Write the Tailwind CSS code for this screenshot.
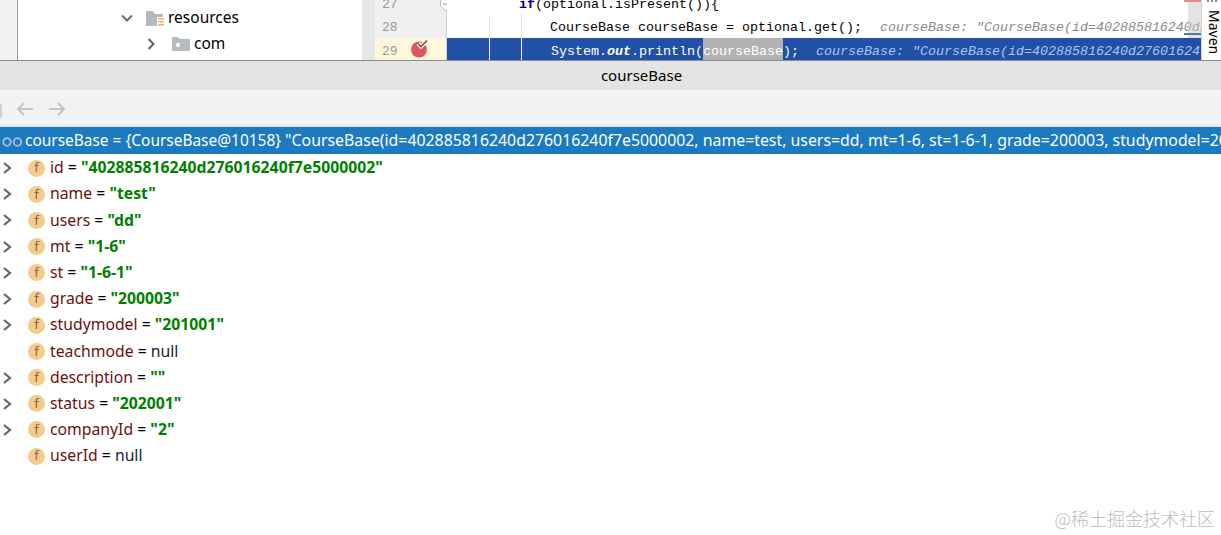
<!DOCTYPE html>
<html>
<head>
<meta charset="utf-8">
<script src="https://cdn.jsdelivr.net/npm/@tailwindcss/browser@4"></script>
</head>
<body class="bg-white overflow-hidden">
<div class="relative w-[1221px] h-[535px] overflow-hidden flex flex-col bg-white font-['Noto_Sans','Open_Sans',sans-serif] text-black">
  <!-- top: project tree + editor -->
  <div class="flex h-[60px] shrink-0 overflow-hidden">
    <div class="w-[18px] bg-[#f2f2f2] border-r border-[#9a9a9a] shrink-0"></div>
    <div class="w-[344px] shrink-0 bg-white flex flex-col justify-end relative">
      <div class="h-[26px] flex items-center pl-[102px] text-[15.5px]">
        <svg width="14" height="14" viewBox="0 0 14 14"><path d="M2 4.500 7 9.500 12 4.500" fill="none" stroke="#6e6e6e" stroke-width="2"/></svg>
        <svg width="19" height="17" viewBox="0 0 19 17" class="ml-[12px]"><path d="M0 1h7l2 3h8v12H0z" fill="#b5b9c0"/><path d="M11 7h7v9h-7z" fill="#fff"/><path d="M12 8h6v1.500h-6zM12 11h6v1.500h-6zM12 14h6v1.500h-6z" fill="#e3b566"/></svg>
        <span class="ml-[3px]">resources</span>
      </div>
      <div class="h-[26px] mb-[3px] flex items-center pl-[126px] text-[15.5px]">
        <svg width="14" height="14" viewBox="0 0 14 14"><path d="M4.500 2 9.500 7 4.500 12" fill="none" stroke="#5f5f5f" stroke-width="2"/></svg>
        <svg width="18" height="14" viewBox="0 0 18 14" class="ml-[14px]"><path d="M0 0h6l2 2h10v12H0z" fill="#b4bcbf"/><circle cx="6" cy="8" r="2.200" fill="#fff"/></svg>
        <span class="ml-[4px]">com</span>
      </div>
    </div>
    <div class="w-[13px] shrink-0 bg-[#e6e6e6]"></div>
    <!-- gutter -->
    <div class="w-[72px] shrink-0 bg-[#f0f0f0] relative font-['Liberation_Mono',monospace] text-[13px] text-[#9a9a9a] border-r border-[#d0d0d0]">
      <div class="h-[17px] pl-[7px] flex items-center"><span class="-mt-[8px]">27</span></div>
      <div class="h-[21px] pl-[7px] flex items-center">28</div>
      <div class="h-[22px] pl-[7px] flex items-center bg-[#fdf7dc] relative">
        <span class="mt-[6px]">29</span>
        <svg width="20" height="20" viewBox="0 0 20 20" class="absolute left-[34px] top-[1px]"><circle cx="10" cy="10.500" r="8" fill="#db5860"/><path d="M9 4.500 12 7.500 18 1.500" fill="none" stroke="#fdf7dc" stroke-width="4"/><path d="M9 4.500 12 7.500 18 1.500" fill="none" stroke="#5c5c5c" stroke-width="1.600"/></svg>
      </div>
      <svg width="12" height="12" viewBox="0 0 12 12" class="absolute left-[65px] top-0"><path d="M.5 -1V6L6 11 11.500 6V-1z" fill="#fff" stroke="#bdbdbd"/><path d="M3 4h6" stroke="#9a9a9a"/></svg>
    </div>
    <!-- code -->
    <div class="relative flex-1 min-w-0 overflow-hidden bg-white font-['Liberation_Mono',monospace] text-[13.33px]">
      <div class="h-[17px] pl-[72px] flex items-center whitespace-pre"><span class="-mt-[8px]"><b class="text-[#000080]">if</b>(optional.isPresent()){</span></div>
      <div class="h-[21px] pl-[103px] flex items-center whitespace-pre"><span>CourseBase courseBase = optional.get();  <i class="text-[#8a8a8a] ml-[2px]">courseBase: "CourseBase(id=402885816240d27601624</i></span></div>
      <div class="h-[22px] pl-[104px] flex items-start bg-[#2150a6] text-white whitespace-pre overflow-hidden"><span class="pt-[6px] leading-[16px]">System.<b><i>out</i></b>.println(<span class="bg-[#b2b2b2] inline-block pt-[6px] -mt-[6px]">courseBase</span>);  <i class="text-[#a9c6ef] ml-[1px]">courseBase: "CourseBase(id=402885816240d27601624</i></span></div>
      <div class="absolute left-[42px] top-[16px] h-[22px] w-px bg-[#e3e3e3]"></div>
      <div class="absolute left-[74px] top-[14px] h-[24px] w-px bg-[#e3e3e3]"></div>
      <div class="absolute left-[42px] top-[38px] h-[22px] w-px bg-white"></div>
      <div class="absolute left-[74px] top-[38px] h-[22px] w-px bg-white"></div>
      <div class="absolute right-0 top-0 h-[38px] w-[13px] bg-[#c8c8c8]/50"></div>
      <div class="absolute right-0 top-0 h-[2px] w-[17px] bg-[#e58a8a]"></div>
      <div class="absolute right-0 top-[33px] h-[2px] w-[17px] bg-[#5577aa]"></div>
    </div>
    <div class="w-[20px] shrink-0 bg-white border-l border-[#d0d0d0] relative">
      <span class="absolute top-[10px] left-[3px] text-[14px] leading-[18px] [writing-mode:vertical-rl]">Maven</span>
      <div class="absolute top-0 left-[5px] w-[10px] h-[2px] border-t-2 border-dotted border-[#888]"></div>
    </div>
  </div>
  <div class="h-px bg-[#8c8c8c] shrink-0"></div>
  <!-- title -->
  <div class="h-[29px] bg-[#e4e4e4] shrink-0 flex items-center justify-center text-[15px] pl-[62px]">courseBase</div>
  <!-- toolbar -->
  <div class="relative h-[36px] bg-[#f2f2f2] shrink-0 flex items-center pl-[16px] pt-[2px] gap-[14px]">
    <div class="absolute left-0 top-[14px] w-[2px] h-[14px] bg-[#d0d0d0]"></div>
    <svg width="18" height="14" viewBox="0 0 18 14"><path d="M17 7H2M8 1 2 7 8 13" fill="none" stroke="#c4c4c4" stroke-width="2"/></svg>
    <svg width="18" height="14" viewBox="0 0 18 14"><path d="M1 7H16M10 1 16 7 10 13" fill="none" stroke="#c4c4c4" stroke-width="2"/></svg>
  </div>
  <!-- selected -->
  <div class="h-[28px] bg-[#1b7ac0] border-t border-[#cfe0ee] shrink-0 flex items-center pl-[2px] text-white whitespace-pre overflow-hidden">
    <svg width="21" height="10" viewBox="0 0 21 10" class="shrink-0 mt-[2px]"><circle cx="5" cy="5" r="3.800" fill="none" stroke="#a9bdcc" stroke-width="1.800"/><circle cx="15.500" cy="5" r="3.800" fill="none" stroke="#a9bdcc" stroke-width="1.800"/></svg>
    <span class="ml-[2px] text-[15.45px]">courseBase = {CourseBase@10158} </span><span class="text-[15.85px]">"CourseBase(id=402885816240d276016240f7e5000002, name=test, users=dd, mt=1-6, st=1-6-1, grade=200003, studymodel=201001, teachmode=null)"</span>
  </div>
  <!-- rows -->
  <div class="flex flex-col text-[15.75px] whitespace-pre pt-[1px]">
    <div class="h-[26.2px] flex items-center"><svg width="12" height="12" viewBox="0 0 12 12"><path d="M4 1 10 6 4 11" fill="none" stroke="#666" stroke-width="2.200"/></svg><span class="ml-[16px] w-[17px] h-[17px] rounded-full bg-[#f5cb8c] text-[#7a6a55] text-[13px] flex items-center justify-center">f</span><span class="ml-[5px] text-[#6b0f0f]">id</span><span> = </span><b class="text-[#008000]">"402885816240d276016240f7e5000002"</b></div>
    <div class="h-[26.2px] flex items-center"><svg width="12" height="12" viewBox="0 0 12 12"><path d="M4 1 10 6 4 11" fill="none" stroke="#666" stroke-width="2.200"/></svg><span class="ml-[16px] w-[17px] h-[17px] rounded-full bg-[#f5cb8c] text-[#7a6a55] text-[13px] flex items-center justify-center">f</span><span class="ml-[5px] text-[#6b0f0f]">name</span><span> = </span><b class="text-[#008000]">"test"</b></div>
    <div class="h-[26.2px] flex items-center"><svg width="12" height="12" viewBox="0 0 12 12"><path d="M4 1 10 6 4 11" fill="none" stroke="#666" stroke-width="2.200"/></svg><span class="ml-[16px] w-[17px] h-[17px] rounded-full bg-[#f5cb8c] text-[#7a6a55] text-[13px] flex items-center justify-center">f</span><span class="ml-[5px] text-[#6b0f0f]">users</span><span> = </span><b class="text-[#008000]">"dd"</b></div>
    <div class="h-[26.2px] flex items-center"><svg width="12" height="12" viewBox="0 0 12 12"><path d="M4 1 10 6 4 11" fill="none" stroke="#666" stroke-width="2.200"/></svg><span class="ml-[16px] w-[17px] h-[17px] rounded-full bg-[#f5cb8c] text-[#7a6a55] text-[13px] flex items-center justify-center">f</span><span class="ml-[5px] text-[#6b0f0f]">mt</span><span> = </span><b class="text-[#008000]">"1-6"</b></div>
    <div class="h-[26.2px] flex items-center"><svg width="12" height="12" viewBox="0 0 12 12"><path d="M4 1 10 6 4 11" fill="none" stroke="#666" stroke-width="2.200"/></svg><span class="ml-[16px] w-[17px] h-[17px] rounded-full bg-[#f5cb8c] text-[#7a6a55] text-[13px] flex items-center justify-center">f</span><span class="ml-[5px] text-[#6b0f0f]">st</span><span> = </span><b class="text-[#008000]">"1-6-1"</b></div>
    <div class="h-[26.2px] flex items-center"><svg width="12" height="12" viewBox="0 0 12 12"><path d="M4 1 10 6 4 11" fill="none" stroke="#666" stroke-width="2.200"/></svg><span class="ml-[16px] w-[17px] h-[17px] rounded-full bg-[#f5cb8c] text-[#7a6a55] text-[13px] flex items-center justify-center">f</span><span class="ml-[5px] text-[#6b0f0f]">grade</span><span> = </span><b class="text-[#008000]">"200003"</b></div>
    <div class="h-[26.2px] flex items-center"><svg width="12" height="12" viewBox="0 0 12 12"><path d="M4 1 10 6 4 11" fill="none" stroke="#666" stroke-width="2.200"/></svg><span class="ml-[16px] w-[17px] h-[17px] rounded-full bg-[#f5cb8c] text-[#7a6a55] text-[13px] flex items-center justify-center">f</span><span class="ml-[5px] text-[#6b0f0f]">studymodel</span><span> = </span><b class="text-[#008000]">"201001"</b></div>
    <div class="h-[26.2px] flex items-center"><span class="ml-[28px] w-[17px] h-[17px] rounded-full bg-[#f5cb8c] text-[#7a6a55] text-[13px] flex items-center justify-center">f</span><span class="ml-[5px] text-[#6b0f0f]">teachmode</span><span> = </span><span class="text-[#10233a]">null</span></div>
    <div class="h-[26.2px] flex items-center"><svg width="12" height="12" viewBox="0 0 12 12"><path d="M4 1 10 6 4 11" fill="none" stroke="#666" stroke-width="2.200"/></svg><span class="ml-[16px] w-[17px] h-[17px] rounded-full bg-[#f5cb8c] text-[#7a6a55] text-[13px] flex items-center justify-center">f</span><span class="ml-[5px] text-[#6b0f0f]">description</span><span> = </span><b class="text-[#008000]">""</b></div>
    <div class="h-[26.2px] flex items-center"><svg width="12" height="12" viewBox="0 0 12 12"><path d="M4 1 10 6 4 11" fill="none" stroke="#666" stroke-width="2.200"/></svg><span class="ml-[16px] w-[17px] h-[17px] rounded-full bg-[#f5cb8c] text-[#7a6a55] text-[13px] flex items-center justify-center">f</span><span class="ml-[5px] text-[#6b0f0f]">status</span><span> = </span><b class="text-[#008000]">"202001"</b></div>
    <div class="h-[26.2px] flex items-center"><svg width="12" height="12" viewBox="0 0 12 12"><path d="M4 1 10 6 4 11" fill="none" stroke="#666" stroke-width="2.200"/></svg><span class="ml-[16px] w-[17px] h-[17px] rounded-full bg-[#f5cb8c] text-[#7a6a55] text-[13px] flex items-center justify-center">f</span><span class="ml-[5px] text-[#6b0f0f]">companyId</span><span> = </span><b class="text-[#008000]">"2"</b></div>
    <div class="h-[26.2px] flex items-center"><span class="ml-[28px] w-[17px] h-[17px] rounded-full bg-[#f5cb8c] text-[#7a6a55] text-[13px] flex items-center justify-center">f</span><span class="ml-[5px] text-[#6b0f0f]">userId</span><span> = </span><span class="text-[#10233a]">null</span></div>
  </div>
  <div class="absolute right-[6px] top-[506px] text-[18px] leading-[24px] text-[#bdbdbd] font-['Noto_Sans_CJK_SC',sans-serif] font-light whitespace-pre">@稀土掘金技术社区</div>
</div>
</body>
</html>
